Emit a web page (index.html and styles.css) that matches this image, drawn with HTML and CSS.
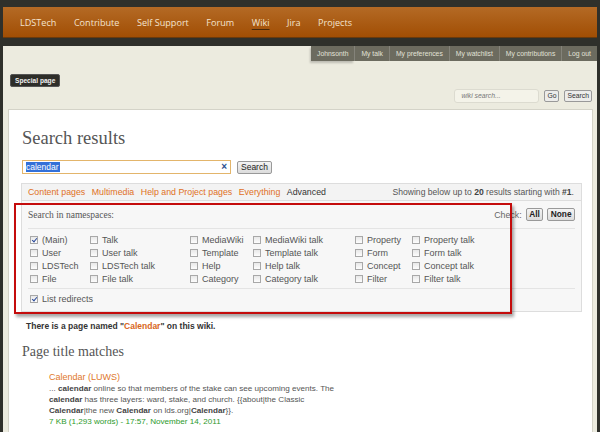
FILE: index.html
```html
<!DOCTYPE html>
<html>
<head>
<meta charset="utf-8">
<link rel="stylesheet" href="styles.css">
</head>
<body>
<div class="frame">
  <nav class="nav">
    <a>LDSTech</a><a>Contribute</a><a>Self Support</a><a>Forum</a><a class="current">Wiki</a><a>Jira</a><a>Projects</a>
  </nav>
  <div class="main">
    <div class="userbar">
      <a>Johnsonth</a><a>My talk</a><a>My preferences</a><a>My watchlist</a><a>My contributions</a><a>Log out</a>
    </div>
    <div class="badge-row"><span class="badge">Special page</span></div>
    <div class="wikisearch">
      <span class="wikiinput">wiki search...</span>
      <span class="sbtn">Go</span>
      <span class="sbtn">Search</span>
    </div>
    <div class="content">
      <h1 class="title">Search results</h1>
      <div class="searchrow">
        <span class="query"><span class="sel">calendar</span><span class="clear">×</span></span>
        <span class="btn">Search</span>
      </div>
      <div class="tabs">
        <div class="tablinks"><a>Content pages</a><a>Multimedia</a><a>Help and Project pages</a><a>Everything</a><span class="active">Advanced</span></div>
        <div class="showing">Showing below up to <b>20</b> results starting with <b>#1</b>.</div>
      </div>
      <div class="ns">
        <div class="nshead">
          <span class="nstitle">Search in namespaces:</span>
          <span class="check">Check: <span class="btn small">All</span><span class="btn small">None</span></span>
        </div>
        <div class="nsgrid">
          <label><i class="cb on"></i>(Main)</label><label><i class="cb"></i>Talk</label><label><i class="cb"></i>MediaWiki</label><label><i class="cb"></i>MediaWiki talk</label><label><i class="cb"></i>Property</label><label><i class="cb"></i>Property talk</label>
          <label><i class="cb"></i>User</label><label><i class="cb"></i>User talk</label><label><i class="cb"></i>Template</label><label><i class="cb"></i>Template talk</label><label><i class="cb"></i>Form</label><label><i class="cb"></i>Form talk</label>
          <label><i class="cb"></i>LDSTech</label><label><i class="cb"></i>LDSTech talk</label><label><i class="cb"></i>Help</label><label><i class="cb"></i>Help talk</label><label><i class="cb"></i>Concept</label><label><i class="cb"></i>Concept talk</label>
          <label><i class="cb"></i>File</label><label><i class="cb"></i>File talk</label><label><i class="cb"></i>Category</label><label><i class="cb"></i>Category talk</label><label><i class="cb"></i>Filter</label><label><i class="cb"></i>Filter talk</label>
        </div>
        <div class="redirects"><label><i class="cb on"></i>List redirects</label></div>
        <div class="highlight"></div>
      </div>
      <p class="exists">There is a page named "<a>Calendar</a>" on this wiki.</p>
      <h2 class="sub">Page title matches</h2>
      <div class="result">
        <a class="rtitle">Calendar (LUWS)</a>
        <div class="snippet">... <b>calendar</b> online so that members of the stake can see upcoming events. The<br><b>calendar</b> has three layers: ward, stake, and church. {{about|the Classic<br><b>Calendar</b>|the new <b>Calendar</b> on lds.org|<b>Calendar</b>}}.</div>
        <div class="meta">7 KB (1,293 words) - 17:57, November 14, 2011</div>
      </div>
    </div>
  </div>
</div>
</body>
</html>
```
FILE: styles.css
```css
html, body { margin: 0; padding: 0; }
body {
  width: 600px; height: 432px; overflow: hidden;
  background: #2f302b;
  font-family: "Liberation Sans", Arial, sans-serif;
  color: #555;
}
.frame { margin: 7px 3px 0 3px; }
.nav {
  height: 30px;
  background: linear-gradient(#b46a25, #a14e04);
  border-bottom: 1px solid #6a3a0c;
  display: flex; align-items: center;
  padding-left: 17px; gap: 17.5px;
  font-family: "Open Sans", sans-serif; font-size: 9.1px; font-weight: 500;
}
.nav a { color: #f4e3cf; }
.nav a.current { text-decoration: underline; text-decoration-color: #4a2a0a; text-underline-offset: 3px; text-decoration-thickness: 1px; }
.main {
  margin-top: 8px;
  background: #ecebdf;
  height: 400px;
  display: flex; flex-direction: column;
}
.userbar { display: flex; justify-content: flex-end; }
.userbar a {
  height: 15px; line-height: 15px; padding: 0 6px;
  background: #6c6b5f; color: #e2e2d8; font-size: 6.8px;
  border-left: 1px solid #84837a;
}
.userbar a:first-child { border-left: none; box-shadow: -1px 2px 2px rgba(0,0,0,0.2); }
.badge-row { margin: 13px 0 0 7px; display: flex; }
.badge {
  background: #2e2e29; color: #f0f0f0; font-weight: bold; font-size: 6.6px;
  height: 11px; line-height: 11px; padding: 0 4px; border-radius: 2px;
  border: 1px solid #555;
}
.wikisearch { display: flex; justify-content: flex-end; align-items: center; gap: 5px; margin: 2px 5px 0 0; height: 14px; }
.wikiinput {
  width: 77px; height: 12px; line-height: 12px; padding-left: 6px;
  background: #f4f3e9; border: 1px solid #dcdbd0; border-radius: 3px;
  font-size: 6.8px; font-style: italic; color: #777;
}
.sbtn {
  height: 10px; line-height: 10px; padding: 0 2px;
  background: #ececea; border: 1px solid #999; border-radius: 2px;
  font-size: 6.8px; color: #333;
}
.content {
  margin: 6px 4px 0 5px;
  background: #fff; border: 1px solid #d4d3c8;
  flex: 1;
  padding: 18px 10px 0 12px;
  position: relative;
}
.title {
  margin: 0 0 0 1px; font-family: "Liberation Serif", serif; font-weight: normal;
  font-size: 18.5px; line-height: 20px; color: #555;
}
.searchrow { display: flex; align-items: center; gap: 6px; margin: 12px 0 0 1px; height: 14px; }
.query {
  width: 201px; height: 12px; border: 1px solid #e3b56b; padding: 0 3px;
  display: flex; align-items: center; justify-content: space-between;
  font-size: 8.5px;
}
.sel { background: #3370d8; color: #fff; line-height: 10px; padding-right: 1px; }
.clear { color: #2a4f90; font-weight: bold; font-size: 10px; line-height: 10px; }
.btn {
  display: inline-block;
  height: 11px; line-height: 11px; padding: 0 3px;
  background: linear-gradient(#f4f4f4, #dcdcdc); border: 1px solid #999; border-radius: 2px;
  font-size: 8.5px; color: #222;
}
.tabs {
  margin-top: 9px; height: 16px;
  background: #f3f3f3; border: 1px solid #ddd;
  display: flex; justify-content: space-between; align-items: center;
  font-size: 8.8px; padding: 0 7px 0 6px;
}
.tablinks { display: flex; gap: 6.5px; }
.tablinks a { color: #e0701e; }
.tablinks .active { color: #333; }
.showing { color: #555; font-size: 8.6px; }
.showing b { color: #444; }
.ns {
  background: #f7f7f7; border: 1px solid #ddd; border-top: none;
  height: 110px; padding: 0 6px; position: relative;
}
.nshead { display: flex; justify-content: space-between; align-items: center; height: 27px; border-bottom: 1px solid #e4e4e4; }
.nstitle { font-family: "Liberation Serif", serif; font-size: 9.5px; color: #555; }
.check { font-size: 8.8px; color: #666; display: flex; align-items: center; gap: 4px; }
.check .small { font-weight: bold; padding: 0 2.5px; font-size: 8.3px; }
.nsgrid {
  display: grid; grid-template-columns: 60px 100px 63px 102px 57px 1fr;
  grid-auto-rows: 13px; padding: 4px 0 3px 2px;
  border-bottom: 1px solid #e4e4e4;
  font-size: 9px;
}
label { display: flex; align-items: center; gap: 4px; color: #555; white-space: nowrap; }
.cb {
  width: 6px; height: 6px; border: 1px solid #a8a8a8;
  background: linear-gradient(#e8e8e8, #fdfdfd);
  position: relative; flex: none;
}
.cb.on::after {
  content: ""; position: absolute; left: 2px; top: 0px; width: 2px; height: 4px;
  border: solid #2b4a9a; border-width: 0 1px 1px 0; transform: rotate(40deg);
}
.redirects { padding: 5px 0 0 2px; font-size: 9px; }
.highlight {
  position: absolute; left: -8px; top: 2px; width: 494px; height: 107px;
  border: 2px solid #c40c0c;
  box-shadow: 2px 3px 3px rgba(0,0,0,0.35);
}
.exists { margin: 9px 0 0 5px; font-size: 8.5px; font-weight: bold; color: #333; line-height: 11px; }
.exists a { color: #d8661c; }
.sub {
  margin: 12px 0 0 1px; font-family: "Liberation Serif", serif; font-weight: normal;
  font-size: 14px; line-height: 16px; color: #555;
}
.result { margin: 11px 0 0 28px; font-size: 8.1px; line-height: 11px; }
.rtitle { display: block; color: #e0782c; font-size: 9px; line-height: 12px; }
.snippet { color: #555; }
.snippet b { color: #444; }
.meta { color: #2d9a2d; }
```
